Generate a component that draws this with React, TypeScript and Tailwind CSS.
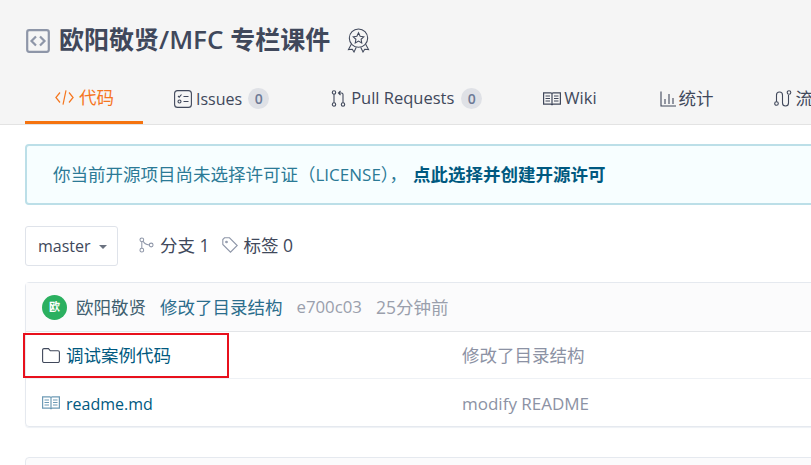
import type { ReactNode } from 'react'

const FONT = '[font-family:"Open_Sans","Noto_Sans_CJK_SC",sans-serif]'

function CodeBoxIcon() {
  return (
    <svg width="24" height="24" viewBox="0 0 24 24" fill="none" stroke="#8e96a8" className="shrink-0">
      <rect x="1.2" y="1.2" width="21.6" height="21.6" rx="2" strokeWidth="2.2" />
      <path d="M10 7.5 5.5 12l4.5 4.5M14 7.5l4.500 4.500-4.500 4.500" strokeWidth="2.2" />
    </svg>
  )
}

function AwardIcon() {
  return (
    <svg width="23" height="25" viewBox="0 0 24 26" fill="none" stroke="#40485b" strokeWidth="1.1" className="shrink-0">
      <circle cx="12" cy="10.5" r="9.6" />
      <path d="m12 5 1.700 3.600 3.800.5-2.800 2.600.7 3.800-3.400-1.900-3.400 1.900.7-3.800-2.800-2.600 3.800-.5z" />
      <path d="M4.500 17 1.500 22.500l4-.3 1.800 2.800 2.400-5M19.500 17l3 5.500-4-.3-1.800 2.800-2.400-5" />
    </svg>
  )
}

function CodeIcon() {
  return (
    <svg width="19" height="17" viewBox="0 0 19 16" fill="none" stroke="#f5761f" strokeWidth="1.2" className="shrink-0">
      <path d="M5 3 .9 8 5 13M14 3l4.100 5-4.100 5M11 .8 8 15.200" />
    </svg>
  )
}

function IssueIcon() {
  return (
    <svg width="18" height="18" viewBox="0 0 18 18" fill="none" stroke="#40485b" strokeWidth="1.1" className="shrink-0">
      <rect x=".6" y=".6" width="16.800" height="16.800" rx="3" />
      <path d="m4 6 1.200 1.200L7.500 4.500M9.500 6.500h5M9.500 11.500h5" />
      <circle cx="5.500" cy="11.500" r="1.500" />
    </svg>
  )
}

function PullIcon() {
  return (
    <svg width="15" height="17" viewBox="0 0 15 17" fill="none" stroke="#40485b" strokeWidth="1.1" className="shrink-0">
      <circle cx="3" cy="2.500" r="1.700" />
      <circle cx="3" cy="14.500" r="1.700" />
      <circle cx="12" cy="14.500" r="1.700" />
      <path d="M3 4.200v8.600M12 12.800V4.500a1.500 1.500 0 0 0-1.500-1.500H7.500M9.500 1 7.500 3l2 2" />
    </svg>
  )
}

function BookIcon({ color, size = 18 }: { color: string; size?: number }) {
  return (
    <svg width={size} height={(size * 14) / 18} viewBox="0 0 18 14" fill="none" stroke={color} strokeWidth="1.2" className="shrink-0">
      <path d="M.6.8h7.200c.7 0 1.200.5 1.200 1v11.400c0-.5-.5-1-1.200-1H.6zM17.400.8h-7.200c-.7 0-1.200.5-1.200 1v11.400c0-.5.5-1 1.200-1h7.200z" />
      <path d="M2.500 4h4.500M2.500 6.500h4.500M2.500 9h4.500M11 4h4.500M11 6.500h4.500M11 9h4.500" strokeWidth="1" />
    </svg>
  )
}

function ChartIcon() {
  return (
    <svg width="16" height="16" viewBox="0 0 16 16" fill="none" stroke="#40485b" strokeWidth="1.1" className="shrink-0">
      <path d="M1 .5v14.500h15M5 8v5M9 3v10M13 7v6" />
    </svg>
  )
}

function FlowIcon() {
  return (
    <svg width="18" height="17" viewBox="0 0 18 17" fill="none" stroke="#40485b" strokeWidth="1.1" className="shrink-0">
      <circle cx="2.500" cy="13.500" r="1.800" />
      <circle cx="15" cy="2.500" r="1.800" />
      <path d="M2.500 11.700V5a3 3 0 0 1 6 0v8a3 3 0 0 0 6 0V5" />
    </svg>
  )
}

function BranchIcon() {
  return (
    <svg width="15" height="16" viewBox="0 0 16 16" fill="none" stroke="#8e96a8" strokeWidth="1.100" className="shrink-0">
      <circle cx="3" cy="2.500" r="2" />
      <circle cx="3" cy="13.500" r="2" />
      <circle cx="13" cy="8" r="2" />
      <path d="M3 4.500v7M4.500 4c1 2.500 3 3.500 6.500 4" />
    </svg>
  )
}

function TagIcon() {
  return (
    <svg width="16" height="16" viewBox="0 0 16 16" fill="none" stroke="#8e96a8" strokeWidth="1.100" className="shrink-0">
      <path d="M.8 2.500v5L8.500 15.200l6.700-6.700L7.500.8h-5z" />
      <circle cx="4.500" cy="5" r=".8" />
    </svg>
  )
}

function FolderIcon() {
  return (
    <svg width="18" height="15" viewBox="0 0 18 15" fill="none" stroke="#40485b" strokeWidth="1.100" className="shrink-0">
      <path d="M.6 2c0-.8.6-1.400 1.400-1.400h4.500l1.800 2.200H16c.8 0 1.400.6 1.400 1.400v8.900c0 .8-.6 1.400-1.400 1.400H2c-.8 0-1.400-.6-1.400-1.400z" />
    </svg>
  )
}

function Count({ n }: { n: number }) {
  return (
    <span className="ml-[2px] flex h-[21px] w-[21px] items-center justify-center rounded-full bg-[#dfe1e6] text-[14px] font-semibold text-[#6d7a96]">
      {n}
    </span>
  )
}

function Tab({ icon, children, className }: { icon: ReactNode; children: ReactNode; className: string }) {
  return (
    <div className={`flex h-full shrink-0 items-center text-[17.5px] text-[#40485b] ${className}`}>
      {icon}
      {children}
    </div>
  )
}

function FileRow({ icon, name, message, border }: { icon: ReactNode; name: ReactNode; message: ReactNode; border: boolean }) {
  return (
    <div className={`flex h-[47px] items-center pt-[1px] ${border ? 'border-b border-[#eef1f5]' : ''}`}>
      <div className="flex w-[436px] shrink-0 items-center gap-[6px] pl-[16px] text-[#005980]">
        <span className="flex w-[18px] justify-center">{icon}</span>
        {name}
      </div>
      <div className="text-[#8c92a4]">{message}</div>
    </div>
  )
}

export default function App() {
  return (
    <div className={`relative h-[465px] w-[811px] overflow-hidden bg-white ${FONT}`}>
      <header className="h-[125px] border-b border-[#e3e3e3] bg-[#f5f5f5] pl-[25px]">
        <div className="flex h-[73px] items-end pb-[20px]">
          <span className="ml-[1px]">
            <CodeBoxIcon />
          </span>
          <h1 className="mb-[-2px] ml-[9px] text-[25px] leading-[32px] font-semibold whitespace-nowrap text-[#40485b]">
            欧阳敬贤<span className="text-[26px]">/MFC </span>专栏课件
          </h1>
          <span className="ml-[17px]">
            <AwardIcon />
          </span>
        </div>
        <nav className="flex h-[51px] w-[900px] items-center">
          <div className="flex h-full w-[118px] shrink-0 items-center gap-[5px] border-b-[3px] border-[#f5730f] pt-[1px] pl-[30px] text-[17.5px] text-[#f5761f]">
            <CodeIcon />
            代码
          </div>
          <Tab icon={<IssueIcon />} className="ml-[31px] gap-[4px]">
            <span className="text-[16px]">Issues</span>
            <Count n={0} />
          </Tab>
          <Tab icon={<PullIcon />} className="ml-[62px] gap-[5px]">
            <span className="text-[16.500px]">Pull Requests</span>
            <Count n={0} />
          </Tab>
          <Tab icon={<BookIcon color="#40485b" />} className="ml-[61px] gap-[3px]">
            <span className="text-[16.500px]">Wiki</span>
          </Tab>
          <Tab icon={<ChartIcon />} className="ml-[63px] gap-[3px]">
            统计
          </Tab>
          <Tab icon={<FlowIcon />} className="ml-[60px] gap-[4px]">
            流水线
          </Tab>
        </nav>
      </header>

      <main className="w-[1000px] pt-[19px] pl-[25px]">
        <div className="flex h-[61px] items-center rounded-[4px] border-2 border-[#bcdfe8] bg-[#f7feff] pl-[26px] text-[17.5px] text-[#2b7a96]">
          你当前开源项目尚未选择许可证（<span className="text-[17px]">LICENSE</span>），
          <span className="ml-[6px] font-bold text-[#005980]">点此选择并创建开源许可</span>
        </div>

        <div className="mt-[21px] flex h-[40px] items-center text-[17.5px] text-[#40485b]">
          <div className="flex h-full w-[93px] items-center rounded-[3px] border border-[#dfe3ea] pl-[12px] text-[16px]">
            master
            <span className="mt-[2px] ml-[8px] h-0 w-0 border-x-[4px] border-t-[4px] border-x-transparent border-t-[#6b7280]" />
          </div>
          <div className="mt-[-2px] ml-[21px] flex items-center gap-[6px]">
            <BranchIcon />
            分支 1
          </div>
          <div className="mt-[-2px] ml-[12px] flex items-center gap-[6px]">
            <TagIcon />
            标签 0
          </div>
        </div>

        <section className="mt-[16px] rounded-[4px] border border-[#e5e9ef] text-[17.5px] shadow-[0_1px_1px_#eef1f5]">
          <div className="flex h-[49px] items-center gap-[14px] border-b border-[#e3e5e8] bg-[#fbfbfc] pl-[16px]">
            <div className="flex items-center gap-[9px] text-[#40606f]">
              <span className="flex h-[25px] w-[25px] items-center justify-center rounded-full bg-[#2bb060] text-[11px] font-bold text-white">
                欧
              </span>
              欧阳敬贤
            </div>
            <span className="text-[#2b6d8c]">修改了目录结构</span>
            <span className="text-[16.800px] text-[#9a9fac]">e700c03</span>
            <span className="text-[#9a9fac]">25分钟前</span>
          </div>
          <FileRow icon={<FolderIcon />} name="调试案例代码" message="修改了目录结构" border />
          <FileRow
            icon={<BookIcon color="#6d9ab5" />}
            name={<span className="pt-[2px] text-[16px]">readme.md</span>}
            message={<span className="text-[17px]">modify README</span>}
            border={false}
          />
        </section>

        <div className="mt-[30px] h-[40px] rounded-[4px] border border-[#e5e9ef] bg-[#fbfbfc]" />
      </main>

      {/* 红框标注 */}
      <div className="pointer-events-none absolute top-[333px] left-[23px] h-[45px] w-[206px] border-2 border-[#e8101c]" />
    </div>
  )
}
